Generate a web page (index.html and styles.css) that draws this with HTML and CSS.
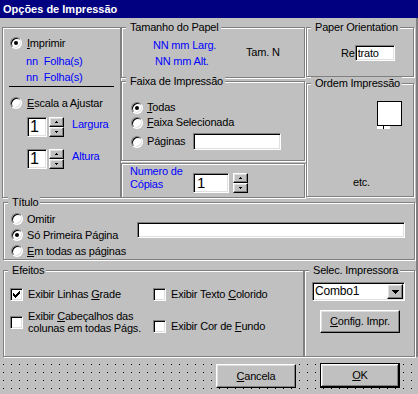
FILE: index.html
```html
<!DOCTYPE html>
<html lang="pt">
<head>
    <meta charset="UTF-8">
    <meta name="viewport" content="width=device-width, initial-scale=1.0">
    <title>Opções de Impressão</title>
    <link rel="stylesheet" href="styles.css">
</head>
<body>
    <div class="window">
        <div class="titlebar">Opções de Impressão</div>

        <div class="top">
            <!-- Imprimir / Escala -->
            <div class="frame left-box">
                <div class="opt"><span class="radio checked"></span><span><u>I</u>mprimir</span></div>
                <div class="blue nn first">nn<span class="gap"></span>Folha(s)</div>
                <div class="blue nn">nn<span class="gap"></span>Folha(s)</div>
                <div class="sep"></div>
                <div class="opt escala"><span class="radio"></span><span><u>E</u>scala a Ajustar</span></div>
                <div class="spin-row">
                    <div class="textbox spin-box">1</div>
                    <div class="spinner">
                        <span class="spin-btn"><svg width="3" height="2" viewBox="0 0 3 2"><path d="M1 0h1v1H1zM0 1h3v1H0z"/></svg></span>
                        <span class="spin-btn"><svg width="3" height="2" viewBox="0 0 3 2"><path d="M0 0h3v1H0zM1 1h1v1H1z"/></svg></span>
                    </div>
                    <span class="blue spin-label">Largura</span>
                </div>
                <div class="spin-row second">
                    <div class="textbox spin-box">1</div>
                    <div class="spinner">
                        <span class="spin-btn"><svg width="3" height="2" viewBox="0 0 3 2"><path d="M1 0h1v1H1zM0 1h3v1H0z"/></svg></span>
                        <span class="spin-btn"><svg width="3" height="2" viewBox="0 0 3 2"><path d="M0 0h3v1H0zM1 1h1v1H1z"/></svg></span>
                    </div>
                    <span class="blue spin-label">Altura</span>
                </div>
            </div>

            <div class="col">
                <div class="frame paper-size">
                    <span class="caption">Tamanho do Papel</span>
                    <div class="sizes blue">
                        <div>NN mm Larg.</div>
                        <div class="alt">NN mm Alt.</div>
                    </div>
                    <div>Tam. N</div>
                </div>
                <div class="frame range">
                    <span class="caption">Faixa de Impressão</span>
                    <div class="opt"><span class="radio checked"></span><span><u>T</u>odas</span></div>
                    <div class="opt"><span class="radio"></span><span><u>F</u>aixa Selecionada</span></div>
                    <div class="opt pages"><span class="radio"></span><span>Páginas</span><div class="textbox pages-box"></div></div>
                </div>
                <div class="frame copies">
                    <div class="blue copies-label">Numero de<br>Cópias</div>
                    <div class="textbox copies-box">1</div>
                    <div class="spinner">
                        <span class="spin-btn"><svg width="3" height="2" viewBox="0 0 3 2"><path d="M1 0h1v1H1zM0 1h3v1H0z"/></svg></span>
                        <span class="spin-btn"><svg width="3" height="2" viewBox="0 0 3 2"><path d="M0 0h3v1H0zM1 1h1v1H1z"/></svg></span>
                    </div>
                </div>
            </div>

            <div class="col right">
                <div class="frame orientation">
                    <span class="caption">Paper Orientation</span>
                    <div class="orient-row">Re<span class="textbox orient-box">trato</span></div>
                </div>
                <div class="frame order">
                    <span class="caption">Ordem Impressão</span>
                    <div class="sheet"></div>
                    <div class="sheet-tab"></div>
                    <div class="etc">etc.</div>
                </div>
            </div>
        </div>

        <!-- Título -->
        <div class="frame title-frame">
            <span class="caption">Título</span>
            <div class="title-opts">
                <div class="opt"><span class="radio"></span><span>Omitir</span></div>
                <div class="opt"><span class="radio checked"></span><span>Só Primeira Página</span></div>
                <div class="opt"><span class="radio"></span><span><u>E</u>m todas as páginas</span></div>
            </div>
            <div class="textbox title-box"></div>
        </div>

        <div class="bottom-frames">
            <div class="frame effects">
                <span class="caption">Efeitos</span>
                <div class="check">
                    <span class="checkbox"><svg width="7" height="7" viewBox="0 0 7 7"><path d="M0 2h1v3H0zM1 3h1v3H1zM2 4h1v3H2zM3 3h1v3H3zM4 2h1v3H4zM5 1h1v3H5zM6 0h1v3H6z"/></svg></span>
                    <span>Exibir Linhas <u>G</u>rade</span>
                </div>
                <div class="check">
                    <span class="checkbox"></span>
                    <span>Exibir Texto <u>C</u>olorido</span>
                </div>
                <div class="check multi">
                    <span class="checkbox"></span>
                    <span>Exibir <u>C</u>abeçalhos das<br>colunas em todas Págs.</span>
                </div>
                <div class="check lower">
                    <span class="checkbox"></span>
                    <span>Exibir Cor de <u>F</u>undo</span>
                </div>
            </div>
            <div class="frame printer">
                <span class="caption">Selec. Impressora</span>
                <div class="textbox combo">
                    <span>Combo1</span>
                    <span class="drop-btn"><svg width="7" height="4" viewBox="0 0 7 4"><path d="M0 0h7v1H0zM1 1h5v1H1zM2 2h3v1H2zM3 3h1v1H3z"/></svg></span>
                </div>
                <div class="btn config-btn"><span><u>C</u>onfig. Impr.</span></div>
            </div>
        </div>

        <div class="footer">
            <div class="btn"><span><u>C</u>ancela</span></div>
            <div class="btn default"><span><u>O</u>K</span></div>
        </div>
    </div>
</body>
</html>
```

FILE: styles.css
```css
* {
    margin: 0;
    padding: 0;
    box-sizing: border-box;
}

body {
    background: #c0c0c0;
    font-family: 'Liberation Sans', Arial, sans-serif;
    font-size: 11px;
    line-height: 13px;
    letter-spacing: -0.2px;
    color: #000;
}

u {
    text-underline-offset: 1px;
}

.window {
    width: 418px;
    height: 394px;
    background: #c0c0c0;
    box-shadow: inset -2px -2px 0 #808080;
    overflow: hidden;
    display: flex;
    flex-direction: column;
}

.titlebar {
    height: 18px;
    background: #000080;
    color: #fff;
    font-weight: bold;
    line-height: 19px;
    letter-spacing: 0;
    padding-left: 3px;
}

.blue {
    color: #0000ff;
}

/* etched group box */
.frame {
    position: relative;
    border: 1px solid #808080;
    box-shadow: inset 1px 1px 0 #fff, 1px 1px 0 #fff;
}

.caption {
    position: absolute;
    top: -7px;
    left: 4px;
    padding: 0 2px 0 4px;
    background: #c0c0c0;
    white-space: nowrap;
}

/* controls */
.radio {
    position: relative;
    flex: none;
    width: 12px;
    height: 12px;
    border-radius: 50%;
    background: #fff;
    border: 1px solid;
    border-color: #808080 #fff #fff #808080;
    box-shadow: inset 1px 1px 0 #000, inset -1px -1px 0 #dfdfdf;
}

.radio.checked::after {
    content: '';
    position: absolute;
    left: 3px;
    top: 3px;
    width: 4px;
    height: 4px;
    border-radius: 50%;
    background: #000;
}

.checkbox {
    flex: none;
    width: 13px;
    height: 13px;
    background: #fff;
    border: 1px solid;
    border-color: #808080 #fff #fff #808080;
    box-shadow: inset 1px 1px 0 #000, inset -1px -1px 0 #dfdfdf;
    padding: 2px 0 0 2px;
}

.checkbox svg {
    display: block;
}

.textbox {
    background: #fff;
    border: 1px solid;
    border-color: #808080 #fff #fff #808080;
    box-shadow: inset 1px 1px 0 #000, inset -1px -1px 0 #dfdfdf;
}

.btn,
.spin-btn,
.drop-btn {
    background: #c0c0c0;
    border: 1px solid;
    border-color: #fff #000 #000 #fff;
    box-shadow: inset -1px -1px 0 #808080, inset 1px 1px 0 #dfdfdf;
    display: flex;
    align-items: center;
    justify-content: center;
}

.btn {
    width: 80px;
    height: 24px;
}

.btn.default {
    border-color: #000;
    box-shadow: inset -1px -1px 0 #000, inset 1px 1px 0 #fff, inset -2px -2px 0 #808080, inset 2px 2px 0 #dfdfdf;
    height: 25px;
    margin-top: -1px;
}

.spinner {
    display: flex;
    flex-direction: column;
    width: 15px;
    height: 20px;
}

.spin-btn {
    height: 10px;
}

.spin-btn svg,
.drop-btn svg {
    display: block;
}

.opt {
    display: flex;
    align-items: center;
    gap: 4px;
    height: 16px;
}

/* top area */
.top {
    display: grid;
    grid-template-columns: 119px 184px 110px;
    align-items: start;
    margin: 9px 0 0 2px;
}

.col {
    display: flex;
    flex-direction: column;
}

.left-box {
    height: 171px;
    padding: 7px 0 0 7px;
    display: flex;
    flex-direction: column;
}

.left-box .opt {
    gap: 5px;
}

.nn {
    height: 16px;
    line-height: 16px;
    padding-left: 16px;
}

.nn.first {
    margin-top: 2px;
}

.gap {
    display: inline-block;
    width: 6px;
}

.sep {
    width: 105px;
    height: 1px;
    margin: 1px 0 0 -1px;
    background: #000;
}

.escala {
    margin-top: 8px;
}

.spin-row {
    display: flex;
    align-items: flex-start;
    height: 20px;
    margin: 6px 0 0 17px;
}

.spin-row.second {
    margin-top: 12px;
}

.spin-box {
    width: 20px;
    height: 20px;
    font-size: 16px;
    line-height: 18px;
    padding-left: 2px;
    margin-right: 2px;
}

.spin-label {
    margin: 1px 0 0 8px;
}

.paper-size {
    height: 51px;
    display: flex;
    align-items: center;
    padding-left: 31px;
}

.sizes {
    width: 93px;
}

.sizes div {
    height: 16px;
    line-height: 16px;
}

.sizes .alt {
    padding-left: 2px;
}

.range {
    height: 80px;
    margin-top: 3px;
    padding: 18px 0 0 9px;
}

.range .opt {
    height: 15px;
}

.range .pages {
    height: 17px;
    margin-top: 3px;
}

.pages-box {
    width: 88px;
    height: 17px;
    margin-left: 4px;
}

.copies {
    height: 35px;
    margin-top: 2px;
    display: flex;
    align-items: flex-start;
    padding: 1px 0 0 8px;
}

.copies-label {
    width: 63px;
}

.copies-box {
    width: 36px;
    height: 20px;
    margin: 8px 4px 0 0;
    font-size: 15px;
    line-height: 18px;
    padding-left: 3px;
}

.copies .spinner {
    margin-top: 8px;
}

.right .frame {
    width: 108px;
    margin-left: 1px;
}

.orientation {
    height: 50px;
    padding: 17px 0 0 34px;
}

.orient-row {
    display: flex;
    align-items: center;
    height: 16px;
}

.orient-box {
    width: 40px;
    height: 16px;
    line-height: 14px;
    padding-left: 2px;
}

.order {
    height: 114px;
    margin-top: 6px;
    display: flex;
    flex-direction: column;
    padding: 17px 0 0 70px;
}

.sheet {
    width: 25px;
    height: 25px;
    background: #fff;
    border: 1px solid #000;
}

.sheet-tab {
    position: relative;
    width: 13px;
    height: 3px;
    background: #fff;
}

.sheet-tab::after {
    content: '';
    position: absolute;
    left: 6px;
    top: 0;
    width: 1px;
    height: 3px;
    background: #000;
}

.etc {
    margin: auto 0 7px -24px;
}

/* Título */
.title-frame {
    width: 412px;
    height: 58px;
    margin: 4px 0 0 3px;
    padding: 8px 0 0 7px;
    display: grid;
    grid-template-columns: 126px 268px;
    align-items: start;
}

.title-box {
    height: 16px;
    margin-top: 11px;
}

/* Efeitos / impressora */
.bottom-frames {
    display: grid;
    grid-template-columns: 301px 111px;
    height: 87px;
    margin: 10px 0 0 3px;
}

.effects {
    display: grid;
    grid-template-columns: 143px auto;
    grid-template-rows: 13px auto;
    align-items: start;
    padding: 17px 0 0 6px;
}

.check {
    display: flex;
    align-items: center;
    gap: 5px;
    height: 13px;
}

.check.multi {
    height: 24px;
    margin-top: 9px;
    line-height: 12px;
}

.check.lower {
    margin-top: 19px;
}

.printer {
    display: flex;
    flex-direction: column;
    align-items: flex-start;
    padding: 11px 0 0 7px;
}

.combo {
    width: 93px;
    height: 19px;
    display: flex;
    align-items: center;
    justify-content: space-between;
    padding: 1px 1px 1px 2px;
    line-height: 15px;
    font-size: 12px;
}

.drop-btn {
    width: 16px;
    height: 15px;
}

.config-btn {
    height: 23px;
    margin: 9px 0 0 8px;
}

/* design-time grid strip */
.footer {
    flex: 1;
    display: flex;
    gap: 24px;
    padding: 7px 0 0 216px;
    background-color: #c0c0c0;
    background-image:
        linear-gradient(90deg, #c0c0c0 7px, transparent 7px),
        linear-gradient(#c0c0c0 7px, #000 7px);
    background-size: 8px 8px;
    background-position: -4px 0;
}
```
